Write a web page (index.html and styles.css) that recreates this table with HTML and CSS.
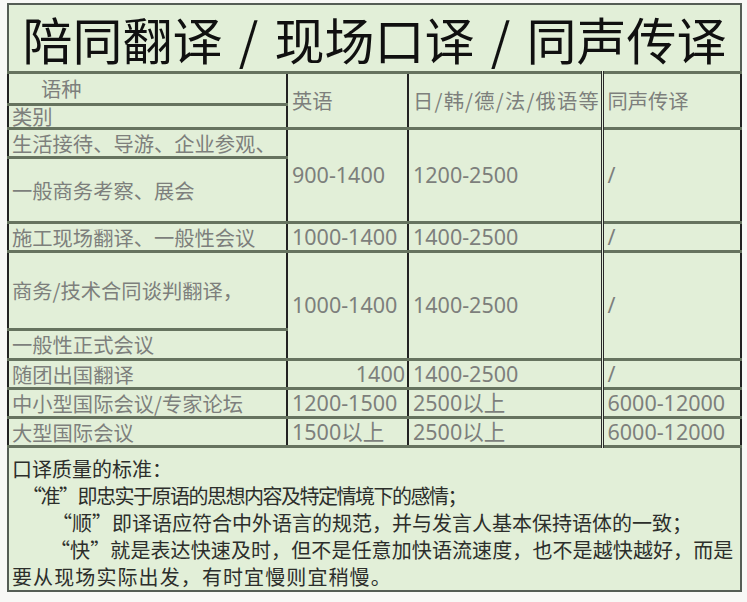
FILE: index.html
```html
<!DOCTYPE html>
<html lang="zh-CN">
<head>
<meta charset="utf-8">
<title>陪同翻译/现场口译/同声传译</title>
<link rel="stylesheet" href="styles.css">
</head>
<body>
<table class="price">
  <colgroup>
    <col class="c1"><col class="c2"><col class="c3"><col class="c4">
  </colgroup>
  <tr class="r-title">
    <td colspan="4" class="title">陪同翻译<span class="sl">/</span>现场口译<span class="sl">/</span>同声传译</td>
  </tr>
  <tr class="r-h1">
    <td class="lang">语种</td>
    <td rowspan="2" class="hd">英语</td>
    <td rowspan="2" class="hd wide">日/韩/德/法/俄语等</td>
    <td rowspan="2" class="hd last">同声传译</td>
  </tr>
  <tr class="r-h2">
    <td class="cat">类别</td>
  </tr>
  <tr class="r-1a">
    <td class="name">生活接待、导游、企业参观、</td>
    <td rowspan="2" class="num">900-1400</td>
    <td rowspan="2" class="num">1200-2500</td>
    <td rowspan="2" class="num last">/</td>
  </tr>
  <tr class="r-1b">
    <td class="name">一般商务考察、展会</td>
  </tr>
  <tr class="r-2">
    <td class="name">施工现场翻译、一般性会议</td>
    <td class="num">1000-1400</td>
    <td class="num">1400-2500</td>
    <td class="num last">/</td>
  </tr>
  <tr class="r-3a">
    <td class="name">商务/技术合同谈判翻译，</td>
    <td rowspan="2" class="num">1000-1400</td>
    <td rowspan="2" class="num">1400-2500</td>
    <td rowspan="2" class="num last">/</td>
  </tr>
  <tr class="r-3b">
    <td class="name">一般性正式会议</td>
  </tr>
  <tr class="r-s">
    <td class="name">随团出国翻译</td>
    <td class="num right">1400</td>
    <td class="num">1400-2500</td>
    <td class="num last">/</td>
  </tr>
  <tr class="r-s">
    <td class="name">中小型国际会议/专家论坛</td>
    <td class="num">1200-1500</td>
    <td class="num">2500以上</td>
    <td class="num last">6000-12000</td>
  </tr>
  <tr class="r-s">
    <td class="name">大型国际会议</td>
    <td class="num">1500以上</td>
    <td class="num">2500以上</td>
    <td class="num last">6000-12000</td>
  </tr>
  <tr class="r-notes">
    <td colspan="4" class="notes">
      <div class="l1">口译质量的标准：</div>
      <div class="l2">“准”即忠实于原语的思想内容及特定情境下的感情；</div>
      <div class="l3">“顺”即译语应符合中外语言的规范，并与发言人基本保持语体的一致；</div>
      <div class="l4">“快”就是表达快速及时，但不是任意加快语流速度，也不是越快越好，而是</div>
      <div class="l5">要从现场实际出发，有时宜慢则宜稍慢。</div>
    </td>
  </tr>
</table>
</body>
</html>
```
FILE: styles.css
```css
html, body {
  margin: 0;
  padding: 0;
  background: #f8f8f6;
}

body {
  padding: 3px 0 0 7px;
  font-family: "Noto Sans CJK SC", sans-serif;
}

.price {
  border-collapse: collapse;
  table-layout: fixed;
  width: 733px;
  background: #e2efd8;
  border: 2px solid #555d55;
}

.c1 { width: 279px; }
.c2 { width: 121px; }
.c3 { width: 194px; }
.c4 { width: 139px; }

.price td {
  border-top: 3px solid #66735f;
  border-bottom: 3px solid #66735f;
  border-left: 2px solid #222;
  border-right: 2px solid #222;
  padding: 0 3px;
  vertical-align: middle;
  color: #7d7f7c;
  font-size: 20.3px;
  line-height: 24px;
  white-space: nowrap;
}

.price td.last {
  border-left: 3px double #2a2a2a;
}

.r-title { height: 68px; }
.r-h1 { height: 32px; }
.r-h2 { height: 23px; }
.r-1a { height: 29px; }
.r-1b { height: 65px; }
.r-2 { height: 29px; }
.r-3a { height: 78px; }
.r-3b { height: 30px; }
.r-s { height: 29px; }
.r-notes { height: 143px; }

.price td.title {
  border-top: 1px solid #555d55;
  border-bottom: 2px solid #6b776b;
  border-left: 2px solid #555d55;
  border-right: 2px solid #555d55;
  text-align: center;
  color: #101010;
  font-size: 50px;
  line-height: 64px;
  font-weight: 400;
  padding: 0;
}

.sl {
  display: inline-block;
  width: 52px;
  text-align: center;
}

.price td.lang {
  padding-left: 32px;
  padding-top: 2px;
  vertical-align: top;
}

.price td.cat {
  vertical-align: bottom;
  line-height: 20px;
  padding-bottom: 1px;
}

.price td.hd {
  padding-left: 4px;
}

.price td.wide {
  letter-spacing: 1.2px;
}

.price td.num {
  font-family: "Noto Sans", "Noto Sans CJK SC", sans-serif;
  font-size: 21.5px;
  padding-left: 4px;
}

.price td.right {
  text-align: right;
  padding-right: 2px;
}

.price td.notes {
  vertical-align: top;
  padding: 7px 3px 0;
  color: #2c2e2b;
  font-size: 20px;
  line-height: 27px;
  border-right: 2px solid #555d55;
  border-left: 2px solid #555d55;
  border-bottom: 2px solid #555d55;
}

.l2 { padding-left: 10px; letter-spacing: -1.5px; }
.l3 { padding-left: 40px; letter-spacing: 0; }
.l4 { padding-left: 38px; letter-spacing: 0.1px; }
.l5 { letter-spacing: 1.1px; }
```
